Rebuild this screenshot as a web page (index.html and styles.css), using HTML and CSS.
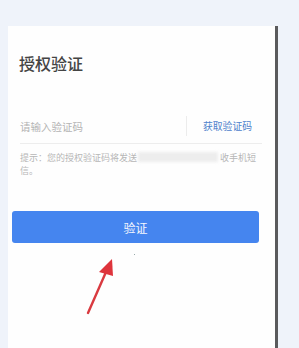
FILE: index.html
```html
<!DOCTYPE html>
<html lang="zh">
<head>
<meta charset="utf-8">
<link rel="stylesheet" href="styles.css">
</head>
<body>
<div class="card">
  <h1 class="title">授权验证</h1>
  <div class="field">
    <span class="placeholder">请输入验证码</span>
    <span class="sep"></span>
    <span class="get-code">获取验证码</span>
  </div>
  <p class="hint">提示：您的授权验证码将发送<span class="blur"></span>收手机短信。</p>
  <button class="btn">验证</button>
  <span class="dot"></span>
  <svg class="arrow" width="40" height="60" viewBox="0 0 40 60">
    <line x1="7" y1="55" x2="25" y2="14" stroke="#d93a40" stroke-width="2.4" stroke-linecap="round"/>
    <polygon points="31,1 18,14 32,18" fill="#de343c"/>
  </svg>
</div>
</body>
</html>
```
FILE: styles.css
```css
html, body {
  margin: 0;
  padding: 0;
}
body {
  background: #eff3fa;
  width: 299px;
  height: 348px;
  overflow: hidden;
  font-family: "Noto Sans CJK SC", "Noto Sans", sans-serif;
}
.card {
  position: relative;
  box-sizing: border-box;
  margin: 26px 0 0 8px;
  width: 270px;
  height: 322px;
  background: #fefefe;
  border-right: 3px solid #5a5a5c;
  padding: 0 13px 0 4px;
}
.title {
  margin: 0;
  padding: 25px 0 0 7px;
  font-size: 16px;
  line-height: 24px;
  font-weight: 500;
  color: #444444;
}
.field {
  display: flex;
  align-items: center;
  margin: 38px 0 0 8px;
  height: 26px;
  padding-bottom: 4px;
  border-bottom: 1px solid #ededed;
  font-size: 10.5px;
}
.placeholder {
  flex: 1;
  color: #b4b4b4;
}
.sep {
  width: 1px;
  height: 20px;
  background: #ececec;
  margin-right: 16px;
}
.get-code {
  color: #4f82cc;
  font-size: 9.8px;
  margin-right: 10px;
}
.hint {
  margin: 7px 0 0 8px;
  font-size: 9px;
  line-height: 13px;
  color: #b6b6b6;
  width: 240px;
  word-break: break-all;
}
.blur {
  display: inline-block;
  width: 80px;
  height: 10px;
  margin: 0 2px 0 1px;
  vertical-align: -1px;
  background: #ededed;
  filter: blur(1.5px);
}
.btn {
  display: block;
  margin: 34px 0 0 0;
  width: 247px;
  height: 32px;
  border: none;
  border-radius: 3px;
  background: #4585ef;
  color: #f4f7fe;
  font-family: inherit;
  font-size: 12px;
  padding: 0;
}
.dot {
  position: absolute;
  left: 126px;
  top: 228px;
  width: 1px;
  height: 1px;
  background: #9aa;
}
.arrow {
  position: absolute;
  left: 73px;
  top: 232px;
}
```
